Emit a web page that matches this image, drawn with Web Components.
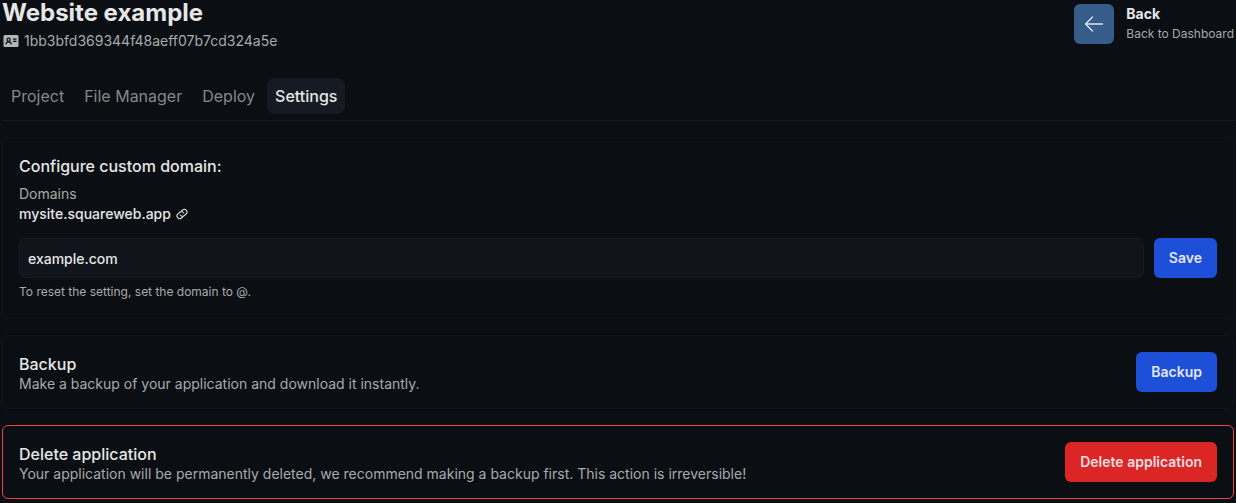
<!DOCTYPE html>
<html lang="en">
<head>
<meta charset="utf-8">
<title>Website example - Settings</title>
<style>
  :root {
    --bg: #0b0e12;
    --surface: #11141b;
    --active: #161a23;
    --line: #161a1f;
    --card-line: #11151a;
    --text: #e6e6e7;
    --muted: #a9aaac;
    --dim: #86888a;
    --blue: #1d4fd8;
    --red: #dc2626;
  }
  body {
    margin: 0;
    background: var(--bg);
    color: var(--text);
    font: 400 14px/20px Inter, "Liberation Sans", sans-serif;
  }
</style>
</head>
<body>
<settings-page></settings-page>
<script>
const define = (name, html, setup) => customElements.define(name, class extends HTMLElement {
  connectedCallback() {
    if (this.shadowRoot) return;
    const template = document.createElement('template');
    template.innerHTML = html;
    this.attachShadow({ mode: 'open' }).append(template.content.cloneNode(true));
    if (setup) setup(this, this.shadowRoot);
  }
});

define('page-header', `
  <style>
    :host { display: flex; justify-content: space-between; align-items: flex-start; }
    h1 { margin: 0; font-size: 24px; line-height: 26px; font-weight: 700; }
    .id { display: flex; align-items: center; gap: 5px; margin-top: 5px; color: var(--muted); }
    .id svg { display: block; margin-left: 1px; }
  </style>
  <div>
    <h1><slot name="title"></slot></h1>
    <div class="id">
      <svg width="16" height="14" viewBox="0 0 16 14" aria-hidden="true">
        <rect x="0.5" y="1" width="15" height="12" rx="1.5" fill="#b4b5b7"/>
        <g fill="none" stroke="#0b0e12" stroke-width="1.2">
          <circle cx="5.6" cy="5.7" r="1.6"/>
          <path d="M2.8 10.4C3 8.7 4 7.9 5.6 7.9S8.2 8.7 8.4 10.4M10 5.2H13.5M10 7.3H13.5"/>
        </g>
      </svg>
      <slot name="id"></slot>
    </div>
  </div>
  <slot name="action"></slot>
`);

define('back-link', `
  <style>
    :host { display: block; padding-top: 4px; }
    a { display: flex; align-items: center; gap: 12px; color: inherit; text-decoration: none; }
    .tile { display: grid; place-items: center; width: 40px; height: 40px; border-radius: 6px; background: #365c8a; }
    .copy { display: grid; font-size: 12px; line-height: 20px; color: var(--muted); }
    strong { font-size: 14px; line-height: 20px; font-weight: 700; color: var(--text); }
  </style>
  <a href="#dashboard">
    <span class="tile">
      <svg width="20" height="16" viewBox="0 0 20 16" fill="none" stroke="#e2e6eb" stroke-width="1.4" stroke-linecap="round" stroke-linejoin="round" aria-hidden="true"><path d="M18.500 8H1.500M8.500 1 1.500 8l7 7"/></svg>
    </span>
    <span class="copy"><strong><slot></slot></strong><slot name="note"></slot></span>
  </a>
`);

define('tab-bar', `
  <style>
    :host { display: block; padding-bottom: 6px; border-bottom: 1px solid var(--line); }
    nav { display: flex; gap: 4px; padding-left: 1px; }
  </style>
  <nav aria-label="Application"><slot></slot></nav>
`);

define('tab-link', `
  <style>
    :host { display: block; font-size: 16px; line-height: 24px; color: var(--dim); }
    a { display: block; padding: 6px 8px; border-radius: 8px; color: inherit; text-decoration: none; }
    :host([active]) { color: var(--text); font-weight: 500; }
    :host([active]) a { background: var(--active); }
  </style>
  <a href="#"><slot></slot></a>
`, (host, root) => {
  if (host.hasAttribute('active')) root.querySelector('a').setAttribute('aria-current', 'page');
});

define('action-button', `
  <style>
    :host { display: block; flex: none; }
    button {
      display: block; height: 40px; padding: 0 15px; border: 0; border-radius: 6px;
      background: var(--blue); color: #e2e6f3; font: inherit; font-weight: 600; cursor: pointer;
    }
    :host([danger]) button { background: var(--red); color: #f1dfe0; }
  </style>
  <button type="button"><slot></slot></button>
`);

define('setting-card', `
  <style>
    :host { display: block; padding: 16px; border: 1px solid var(--card-line); border-radius: 6px; }
    :host([danger]) { border-color: #ef4444; }
  </style>
  <slot></slot>
`);

define('action-row', `
  <style>
    :host { display: flex; align-items: center; justify-content: space-between; gap: 16px; }
    h2 { margin: 0; font-size: 16px; line-height: 20px; font-weight: 500; }
    p { margin: 0; color: var(--muted); }
    .copy { padding-top: 2px; margin-bottom: -2px; }
  </style>
  <div class="copy"><h2><slot name="title"></slot></h2><p><slot></slot></p></div>
  <slot name="action"></slot>
`);

define('domain-form', `
  <style>
    :host { display: block; }
    h2 { margin: 0 0 6px; font-size: 16px; line-height: 24px; font-weight: 500; }
    .label { display: block; color: var(--muted); }
    .domain { display: flex; align-items: center; gap: 4px; width: max-content; color: inherit; font-weight: 500; text-decoration: none; }
    .row { display: flex; gap: 10px; margin: 14px 0 6px; }
    input {
      flex: 1; min-width: 0; height: 40px; box-sizing: border-box; padding: 0 8px;
      border: 1px solid var(--line); border-radius: 6px; background: var(--surface);
      color: var(--text); font: inherit; font-weight: 500; outline: none;
    }
    p { margin: 0 0 2px; font-size: 12px; line-height: 16px; color: var(--muted); }
  </style>
  <h2>Configure custom domain:</h2>
  <label class="label" for="domain">Domains</label>
  <a class="domain" href="#site">mysite.squareweb.app
    <svg width="14" height="14" viewBox="0 0 14 14" fill="none" stroke="currentColor" stroke-width="1" aria-hidden="true">
      <g transform="rotate(-40 7 7)">
        <path d="M6.200 9.700H4A2.700 2.700 0 0 1 4 4.300H6.500A2.700 2.700 0 0 1 9 7.800"/>
        <path d="M7.800 4.300H10A2.700 2.700 0 0 1 10 9.700H7.500A2.700 2.700 0 0 1 5 6.200"/>
      </g>
    </svg>
  </a>
  <div class="row">
    <input id="domain" type="text" value="example.com" aria-describedby="hint">
    <action-button>Save</action-button>
  </div>
  <p id="hint">To reset the setting, set the domain to @.</p>
`);

define('settings-page', `
  <style>
    :host { display: block; padding: 0 2px 4px; }
    tab-bar { margin-top: 27px; }
    main { display: grid; gap: 16px; margin-top: 16px; }
  </style>
  <page-header>
    <span slot="title">Website example</span>
    <span slot="id">1bb3bfd369344f48aeff07b7cd324a5e</span>
    <back-link slot="action">Back<span slot="note">Back to Dashboard</span></back-link>
  </page-header>
  <tab-bar>
    <tab-link>Project</tab-link>
    <tab-link>File Manager</tab-link>
    <tab-link>Deploy</tab-link>
    <tab-link active>Settings</tab-link>
  </tab-bar>
  <main>
    <setting-card><domain-form></domain-form></setting-card>
    <setting-card>
      <action-row>
        <span slot="title">Backup</span>
        Make a backup of your application and download it instantly.
        <action-button slot="action">Backup</action-button>
      </action-row>
    </setting-card>
    <setting-card danger>
      <action-row>
        <span slot="title">Delete application</span>
        Your application will be permanently deleted, we recommend making a backup first. This action is irreversible!
        <action-button slot="action" danger>Delete application</action-button>
      </action-row>
    </setting-card>
  </main>
`);
</script>
</body>
</html>
